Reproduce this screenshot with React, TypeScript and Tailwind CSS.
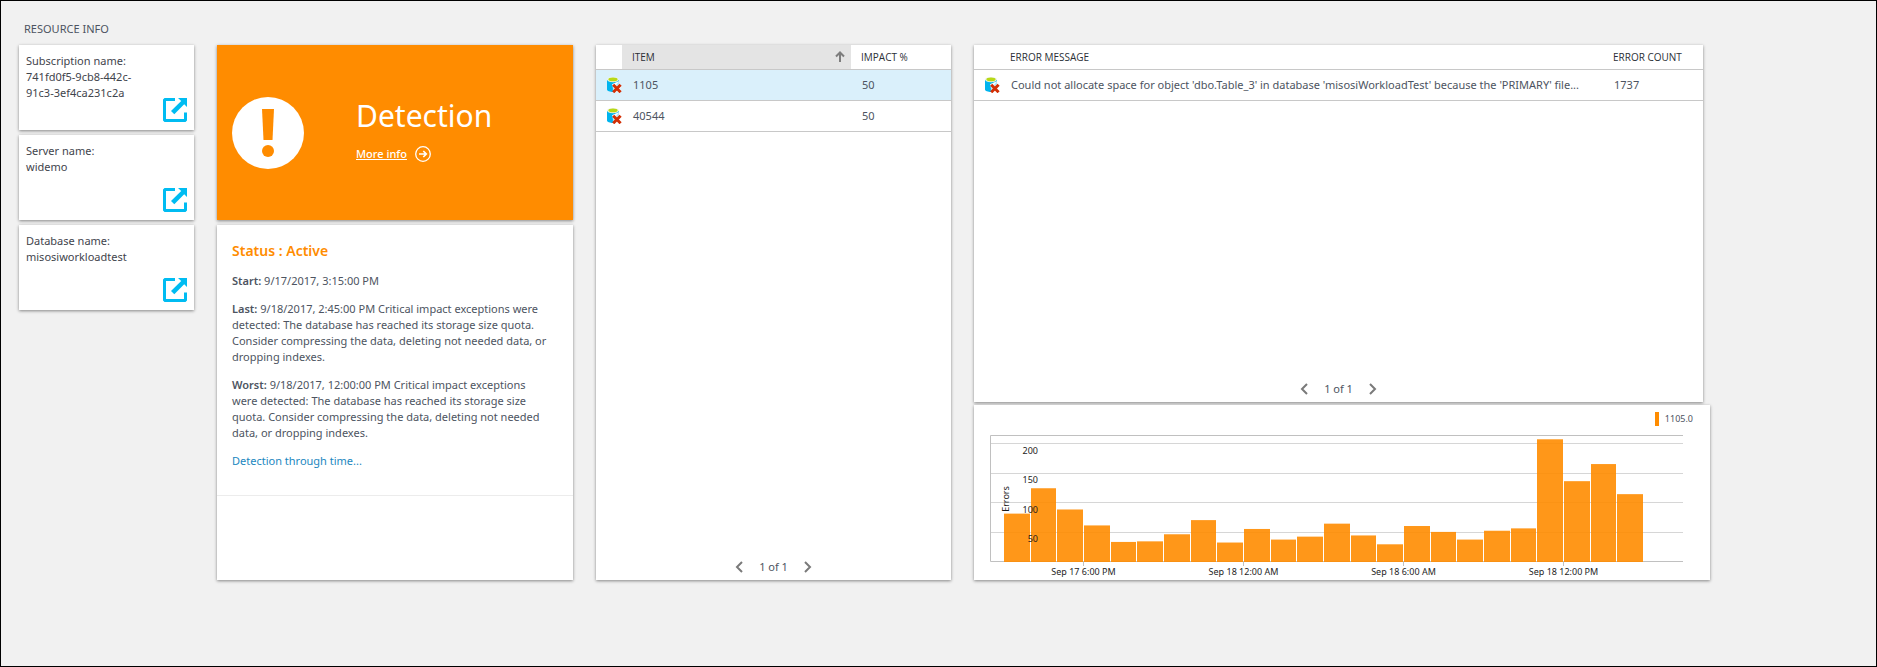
import type { ReactNode } from "react";

const CARD = "bg-white shadow-[0_1px_3px_rgba(0,0,0,0.45)]";
const HEAD = "h-6 text-left align-middle font-['Open_Sans',sans-serif] text-[10px] leading-4 font-normal text-[#2b2f36]";

const resources = [
  { label: "Subscription name:", value: "741fd0f5-9cb8-442c-91c3-3ef4ca231c2a" },
  { label: "Server name:", value: "widemo" },
  { label: "Database name:", value: "misosiworkloadtest" },
];

const items = [
  { id: "1105", impact: 50, selected: true },
  { id: "40544", impact: 50, selected: false },
];

const errorCounts = [82, 125, 89, 62, 34, 35, 47, 71, 33, 56, 38, 43, 65, 45, 30, 61, 51, 38, 53, 57, 208, 137, 166, 115];

const gridLines = [
  { value: 200, y: 38.5, labelY: 49 },
  { value: 150, y: 68.5, labelY: 78 },
  { value: 100, y: 97.5, labelY: 108 },
  { value: 50, y: 127.5, labelY: 137 },
];

const timeLabels = [
  { text: "Sep 17 6:00 PM", x: 109.5 },
  { text: "Sep 18 12:00 AM", x: 269.5 },
  { text: "Sep 18 6:00 AM", x: 429.5 },
  { text: "Sep 18 12:00 PM", x: 589.5 },
];

const BASELINE = 157;
const barStart = (i: number) => Math.floor(30 + (i * 80) / 3 + 0.5);

function OpenIcon() {
  return (
    <svg viewBox="0 0 24 24" className="size-6" fill="#00bcf2" aria-hidden="true">
      <path d="M1.500 0H12v3H3v18h18v-6.500h3V22.500L22.500 24H1.500L0 22.500V1.500Z" />
      <path d="M15 0h9v9l-2.800-2.800L11.300 16.300 8 13l10.200-10Z" />
    </svg>
  );
}

function DatabaseErrorIcon() {
  return (
    <svg viewBox="0 0 15 16" className="h-4 w-[15px]" aria-hidden="true">
      <path d="M0 3v9.500C0 14 3 15 6 15l6-3V3Z" fill="#00b4ee" />
      <path d="M5.500 7 12 4v5L6 13Z" fill="#a9e4f8" />
      <path d="M5 7.500 8 6l4-1.500L9 8 6 9.500Z" fill="#fff" />
      <ellipse cx="6" cy="2.600" rx="6" ry="2.600" fill="#eef3e4" />
      <ellipse cx="6" cy="2.400" rx="4.600" ry="1.800" fill="#b8d915" />
      <path d="m7 8.500 6 6m0-6-6 6" stroke="#fff" strokeOpacity="0.500" strokeWidth="4.500" />
      <path d="m6.200 7.800 7.400 7.400m0-7.400-7.400 7.400" stroke="#d32f05" strokeWidth="3" />
    </svg>
  );
}

function Chevron({ d, label }: { d: string; label: string }) {
  return (
    <button type="button" aria-label={label} className="flex size-4 items-center justify-center">
      <svg viewBox="0 0 8 12" className="h-3 w-2" fill="none" stroke="#7a7a7a" strokeWidth="2" aria-hidden="true">
        <path d={d} />
      </svg>
    </button>
  );
}

function Pager() {
  return (
    <nav aria-label="Pages" className="flex h-[26px] items-center justify-center gap-3">
      <Chevron d="M7 1 2 6l5 5" label="Previous page" />
      <span>1 of 1</span>
      <Chevron d="m1 1 5 5-5 5" label="Next page" />
    </nav>
  );
}

function Note({ title, children }: { title: string; children: ReactNode }) {
  return (
    <p>
      <strong className="font-semibold text-[#4d5461]">{title}</strong> {children}
    </p>
  );
}

function ResourceList() {
  return (
    <ul className="flex flex-col gap-[5px]">
      {resources.map((r) => (
        <li key={r.label} className={`flex min-h-[85px] gap-3 pt-2 pr-[7px] pb-2 pl-[7px] text-[#3f444c] ${CARD}`}>
          <p className="flex-1">
            {r.label}
            <br />
            {r.value}
          </p>
          <a href="#open" aria-label={`Open ${r.value}`} className="self-end">
            <OpenIcon />
          </a>
        </li>
      ))}
    </ul>
  );
}

function Detection() {
  return (
    <div className="flex flex-col gap-[5px]">
      <section className="flex min-h-[175px] items-center gap-[52px] bg-[#ff8c00] px-[15px] text-white shadow-[0_1px_3px_rgba(0,0,0,0.45)]">
        <svg viewBox="0 0 72 72" className="size-[72px]" aria-hidden="true">
          <circle cx="36" cy="36" r="36" fill="#fff" />
          <path d="M30 12h12l-1.500 31h-9Z" fill="#ff8c00" />
          <circle cx="36" cy="54" r="6" fill="#ff8c00" />
        </svg>
        <div className="flex flex-col gap-[10px] pb-2">
          <h2 className="text-3xl leading-10">Detection</h2>
          <a href="#more" className="flex items-center gap-2">
            <span className="font-medium underline">More info</span>
            <svg viewBox="0 0 16 16" className="size-4" fill="none" stroke="#fff" aria-hidden="true">
              <circle cx="8" cy="8" r="7.300" strokeWidth="1.300" />
              <path d="M4 8h7M8.300 5l3 3-3 3" strokeWidth="1.700" />
            </svg>
          </a>
        </div>
      </section>
      <section className={`flex-1 ${CARD}`}>
        <div className="flex flex-col gap-3 border-b border-[#ececec] pt-4 pr-5 pb-[26px] pl-[15px]">
          <h3 className="text-sm leading-5 font-semibold text-[#ff8c00]">Status : Active</h3>
          <Note title="Start:">9/17/2017, 3:15:00 PM</Note>
          <Note title="Last:">
            9/18/2017, 2:45:00 PM Critical impact exceptions were detected: The database has reached its storage size
            quota. Consider compressing the data, deleting not needed data, or dropping indexes.
          </Note>
          <Note title="Worst:">
            9/18/2017, 12:00:00 PM Critical impact exceptions were detected: The database has reached its storage size
            quota. Consider compressing the data, deleting not needed data, or dropping indexes.
          </Note>
          <a href="#timeline" className="text-[#1b87c0]">
            Detection through time...
          </a>
        </div>
      </section>
    </div>
  );
}

function ItemTable() {
  return (
    <section className={`flex min-h-[535px] flex-col justify-between ${CARD}`}>
      <table className="w-full table-fixed border-collapse">
        <thead>
          <tr className="border-b border-[#c8c8c8]">
            <th className={`w-[26px] ${HEAD}`} aria-label="Type" />
            <th className={`bg-[#e4e4e4] pr-[6px] pl-[10px] ${HEAD}`}>
              <button type="button" className="flex w-full items-center justify-between">
                ITEM
                <svg viewBox="0 0 10 11" className="h-[11px] w-[10px]" fill="none" stroke="#7d7d7d" strokeWidth="2" aria-hidden="true">
                  <path d="M5 11V2M1 5.500l4-4 4 4" />
                </svg>
              </button>
            </th>
            <th className={`w-[100px] pl-[10px] ${HEAD}`}>IMPACT %</th>
          </tr>
        </thead>
        <tbody>
          {items.map((item) => (
            <tr key={item.id} className={`h-[31px] border-b border-[#c8c8c8] ${item.selected ? "bg-[#daf0fb]" : "bg-white"}`}>
              <td className="pl-[11px]">
                <DatabaseErrorIcon />
              </td>
              <td className="pl-[11px]">{item.id}</td>
              <td className="pl-[11px]">{item.impact}</td>
            </tr>
          ))}
        </tbody>
      </table>
      <Pager />
    </section>
  );
}

function ErrorTable() {
  return (
    <section className={`mr-[7px] flex min-h-[357px] flex-col justify-between ${CARD}`}>
      <table className="w-full table-fixed border-collapse">
        <thead>
          <tr className="border-b border-[#c8c8c8]">
            <th className={`w-[26px] ${HEAD}`} aria-label="Type" />
            <th className={`pl-[10px] ${HEAD}`}>ERROR MESSAGE</th>
            <th className={`w-[100px] pl-[10px] ${HEAD}`}>ERROR COUNT</th>
          </tr>
        </thead>
        <tbody>
          <tr className="h-[31px] border-b border-[#c8c8c8]">
            <td className="pl-[11px]">
              <DatabaseErrorIcon />
            </td>
            <td className="truncate pl-[11px]">
              Could not allocate space for object 'dbo.Table_3' in database 'misosiWorkloadTest' because the 'PRIMARY'
              file...
            </td>
            <td className="pl-[11px]">1737</td>
          </tr>
        </tbody>
      </table>
      <Pager />
    </section>
  );
}

function ErrorChart() {
  return (
    <section className={CARD}>
      <div className="flex h-7 items-center justify-end gap-[6px] pr-[17px]">
        <span className="h-[14px] w-1 bg-[#ff8c00]" />
        <span className="text-[9px] leading-4">1105.0</span>
      </div>
      <svg viewBox="0 28 736 147" className="block h-auto w-full text-[9px]" role="img" aria-label="Errors">
        <g stroke="#d6d6d6">
          {gridLines.map((g) => (
            <path key={g.value} d={`M17 ${g.y}H709`} />
          ))}
        </g>
        <g stroke="#c0c0c0" fill="none">
          <path d="M709 30.500H16.500V156.500H709" />
          {timeLabels.map((t) => (
            <path key={t.x} d={`M${t.x} 157v4`} />
          ))}
        </g>
        <g fill="#ff8c00" fillOpacity="0.900">
          {errorCounts.map((count, i) => (
            <rect
              key={i}
              x={barStart(i)}
              y={BASELINE - count * 0.59}
              width={barStart(i + 1) - barStart(i) - 1}
              height={count * 0.59}
            />
          ))}
        </g>
        <g fill="#1e1e1e">
          {gridLines.map((g) => (
            <text key={g.value} x="64" y={g.labelY} textAnchor="end">
              {g.value}
            </text>
          ))}
          {timeLabels.map((t) => (
            <text key={t.x} x={t.x} y="170" textAnchor="middle">
              {t.text}
            </text>
          ))}
          <text transform="translate(35 94) rotate(-90)" textAnchor="middle">
            Errors
          </text>
        </g>
      </svg>
    </section>
  );
}

export default function App() {
  return (
    <main className="min-h-screen border border-black bg-[#f1f1f1] px-[18px] pt-5 pb-6 font-['Noto_Sans','Open_Sans',sans-serif] text-[11px] leading-4 text-[#4d5461]">
      <h1 className="mb-2 pl-[5px] text-[11px] leading-4">RESOURCE INFO</h1>
      <div className="grid grid-cols-[175px_356px_355px_minmax(0,736px)] gap-[23px]">
        <ResourceList />
        <Detection />
        <ItemTable />
        <div className="flex flex-col gap-[3px]">
          <ErrorTable />
          <ErrorChart />
        </div>
      </div>
    </main>
  );
}
